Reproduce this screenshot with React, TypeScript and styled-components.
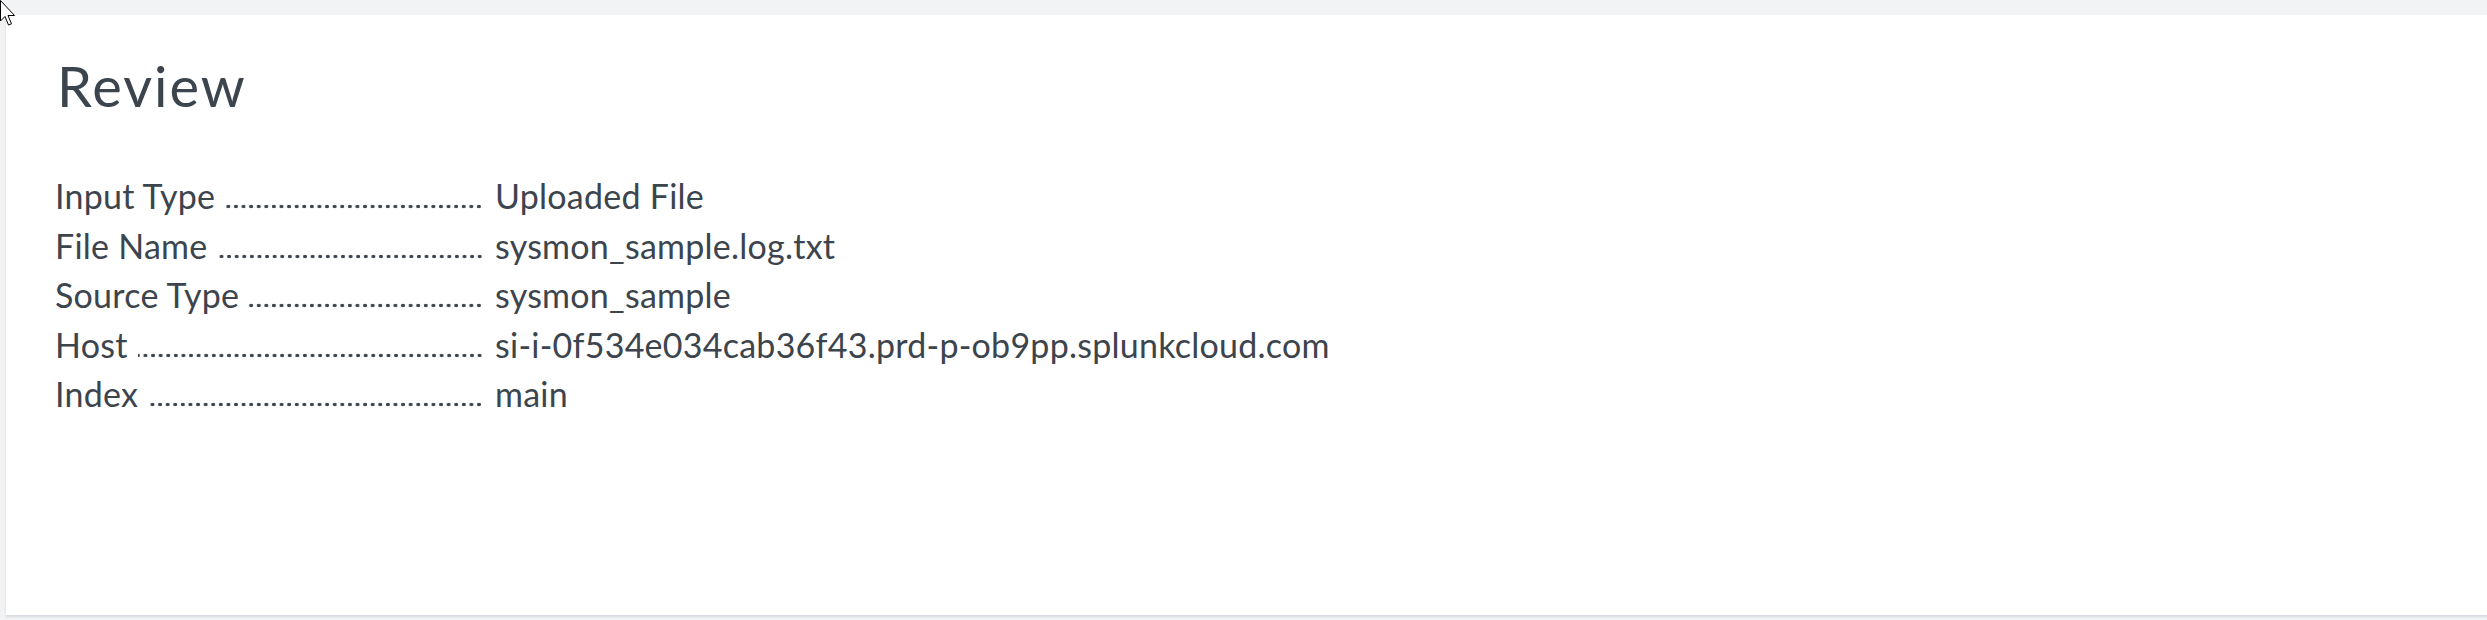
import React from "react";
import styled, { createGlobalStyle } from "styled-components";

const Global = createGlobalStyle`
  html, body {
    margin: 0;
    padding: 0;
    background: #f2f3f5;
    overflow: hidden;
  }
  body {
    font-family: Lato, "Open Sans", "Liberation Sans", sans-serif;
    color: #3c444d;
  }
`;

const Page = styled.div`
  position: relative;
  width: 2487px;
  height: 620px;
  padding: 15px 0 0 6px;
  box-sizing: border-box;
`;

const Card = styled.section`
  background: #ffffff;
  height: 600px;
  width: 2490px;
  box-sizing: border-box;
  padding: 39px 0 0 49px;
  box-shadow: 0 2px 2px rgba(195, 203, 212, 0.6);
`;

const Title = styled.h1`
  margin: 0 0 0 2px;
  font-size: 56px;
  line-height: 64px;
  font-weight: 400;
  letter-spacing: 2px;
  color: #3c444d;
`;

const List = styled.dl`
  margin: 53px 0 0 0;
  display: flex;
  flex-direction: column;
`;

const Row = styled.div`
  display: flex;
  align-items: baseline;
  font-size: 34px;
  line-height: 49.5px;
  letter-spacing: 0.25px;
`;

const Label = styled.dt`
  display: flex;
  align-items: stretch;
  width: 428px;
  white-space: nowrap;
  margin: 0;
`;

const LabelText = styled.span`
  flex: none;
`;

const Leader = styled.span`
  flex: 1;
  margin-left: 10px;
  background-image: radial-gradient(circle, #3c444d 1.6px, transparent 2.1px);
  background-size: 7.6px 5px;
  background-repeat: repeat-x;
  background-position: right 0 top 33px;
`;

const Value = styled.dd`
  margin: 0 0 0 12px;
  white-space: nowrap;
`;

const Cursor = styled.svg`
  position: absolute;
  left: 0;
  top: 0;
`;

const rows: [string, string][] = [
  ["Input Type", "Uploaded File"],
  ["File Name", "sysmon_sample.log.txt"],
  ["Source Type", "sysmon_sample"],
  ["Host", "si-i-0f534e034cab36f43.prd-p-ob9pp.splunkcloud.com"],
  ["Index", "main"],
];

export default function App() {
  return (
    <>
      <Global />
      <Page>
        <Card>
          <Title>Review</Title>
          <List>
            {rows.map(([k, v]) => (
              <Row key={k}>
                <Label>
                  <LabelText>{k}</LabelText>
                  <Leader aria-hidden="true" />
                </Label>
                <Value>{v}</Value>
              </Row>
            ))}
          </List>
        </Card>
        <Cursor width="20" height="28" viewBox="0 0 20 28">
          <path
            d="M0.5 0.5 L0.5 21 L5 16.5 L8.5 25 L11.5 23.8 L8 15.5 L14.5 15.5 Z"
            fill="#ffffff"
            stroke="#000000"
            strokeWidth="1"
          />
        </Cursor>
      </Page>
    </>
  );
}
